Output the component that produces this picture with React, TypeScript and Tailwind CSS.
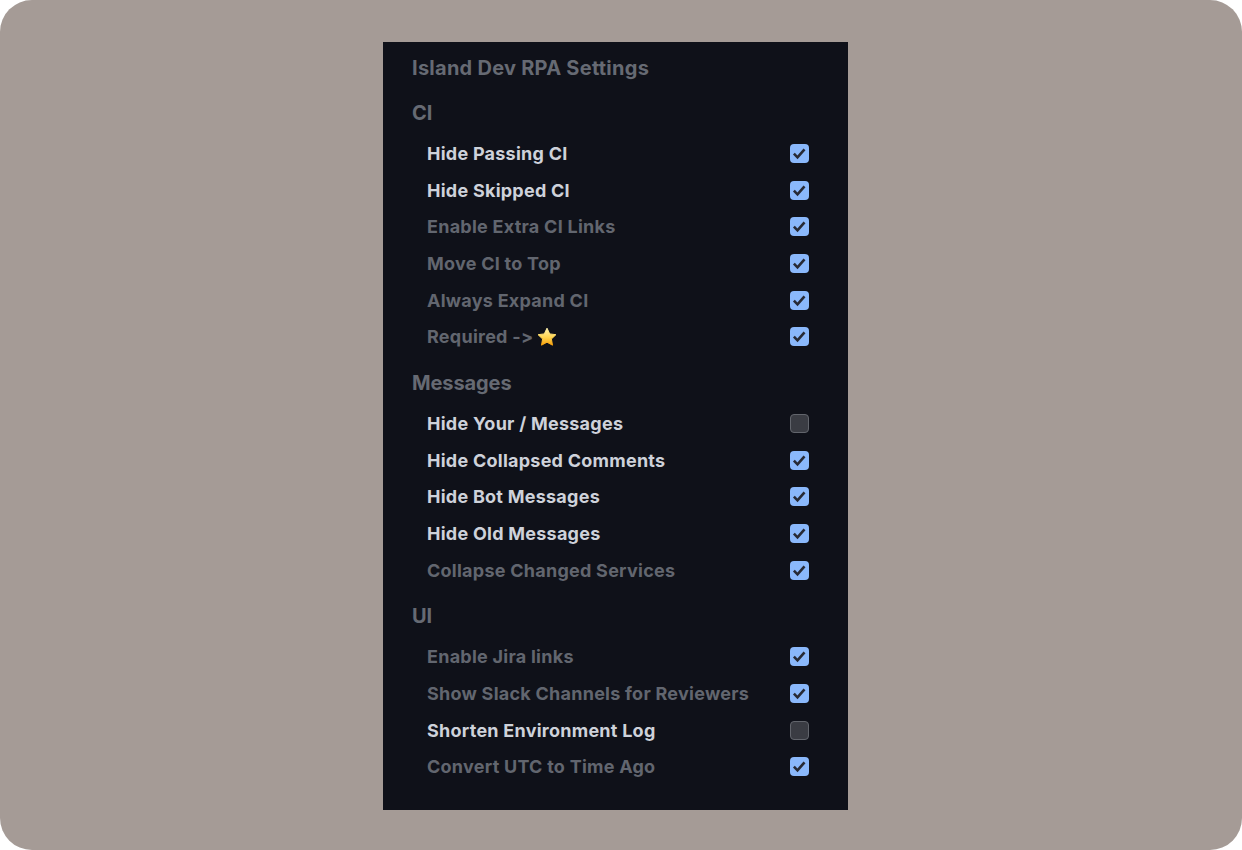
import React from "react";

type Row = { label: string; bright?: boolean; checked?: boolean; star?: boolean };

const Star = () => (
  <svg width="20" height="20" viewBox="0 0 20 20" className="ml-[4px] shrink-0">
    <defs>
      <linearGradient id="starFill" x1="0" y1="0" x2="0" y2="1">
        <stop offset="0" stopColor="#fff3b0" />
        <stop offset="0.55" stopColor="#ffd34d" />
        <stop offset="1" stopColor="#f59e0b" />
      </linearGradient>
    </defs>
    <path
      d="M10 1.2l2.7 5.7 6.2.8-4.5 4.3 1.1 6.2L10 15.2l-5.5 3 1.1-6.2L1.1 7.7l6.2-.8z"
      fill="url(#starFill)"
      stroke="url(#starFill)"
      strokeWidth="1"
      strokeLinejoin="round"
    />
  </svg>
);

const Check = ({ checked }: { checked: boolean }) =>
  checked ? (
    <span className="block h-[19px] w-[19px] rounded-[4px] bg-[#8ab8fb]">
      <svg width="19" height="19" viewBox="0 0 19 19" className="block">
        <path d="M3.9 9.7l3.6 3.6 7-8" fill="none" stroke="#272a35" strokeWidth="2.6" />
      </svg>
    </span>
  ) : (
    <span className="block h-[19px] w-[19px] rounded-[4px] border border-[#62656c] bg-[#3a3c43]" />
  );

const Setting = ({ label, bright, checked = true, star }: Row) => (
  <div className="flex h-[36.67px] items-center justify-between pl-[44px] pr-[39px]">
    <span className={`flex items-center pt-[1px] text-[18px] font-[650] leading-[20px] tracking-[0.25px] [font-variant-ligatures:none] [font-feature-settings:'calt'_0] ${bright ? "text-[#ced2da]" : "text-[#62666f]"}`}>
      {label}
      {star && <Star />}
    </span>
    <Check checked={checked} />
  </div>
);

const Section = ({ title, rows, className }: { title: string; rows: Row[]; className: string }) => (
  <section className={className}>
    <h2 className="h-[26px] pl-[29px] text-[20px] font-[650] leading-[26px] tracking-[-0.1px] text-[#666a73]">{title}</h2>
    <div className="mt-[9.2px]">
      {rows.map((r) => (
        <Setting key={r.label} {...r} />
      ))}
    </div>
  </section>
);

export default function App() {
  return (
    <div className="h-[850px] bg-white font-['Inter',sans-serif]">
      <div className="h-full rounded-[32px] bg-[#a59b96] pl-[383px] pt-[42px]">
        <main className="h-[768px] w-[465px] bg-[#0f1119] pt-[13px]">
          <h1 className="h-[26px] pl-[29px] text-[20px] font-[650] leading-[26px] tracking-[0.26px] text-[#666a73]">
            Island Dev RPA Settings
          </h1>
          <Section
            title="CI"
            className="mt-[19px]"
            rows={[
              { label: "Hide Passing CI", bright: true },
              { label: "Hide Skipped CI", bright: true },
              { label: "Enable Extra CI Links" },
              { label: "Move CI to Top" },
              { label: "Always Expand CI" },
              { label: "Required ->", star: true },
            ]}
          />
          <Section
            title="Messages"
            className="mt-[14.8px]"
            rows={[
              { label: "Hide Your / Messages", bright: true, checked: false },
              { label: "Hide Collapsed Comments", bright: true },
              { label: "Hide Bot Messages", bright: true },
              { label: "Hide Old Messages", bright: true },
              { label: "Collapse Changed Services" },
            ]}
          />
          <Section
            title="UI"
            className="mt-[14.8px]"
            rows={[
              { label: "Enable Jira links" },
              { label: "Show Slack Channels for Reviewers" },
              { label: "Shorten Environment Log", bright: true, checked: false },
              { label: "Convert UTC to Time Ago" },
            ]}
          />
        </main>
      </div>
    </div>
  );
}
